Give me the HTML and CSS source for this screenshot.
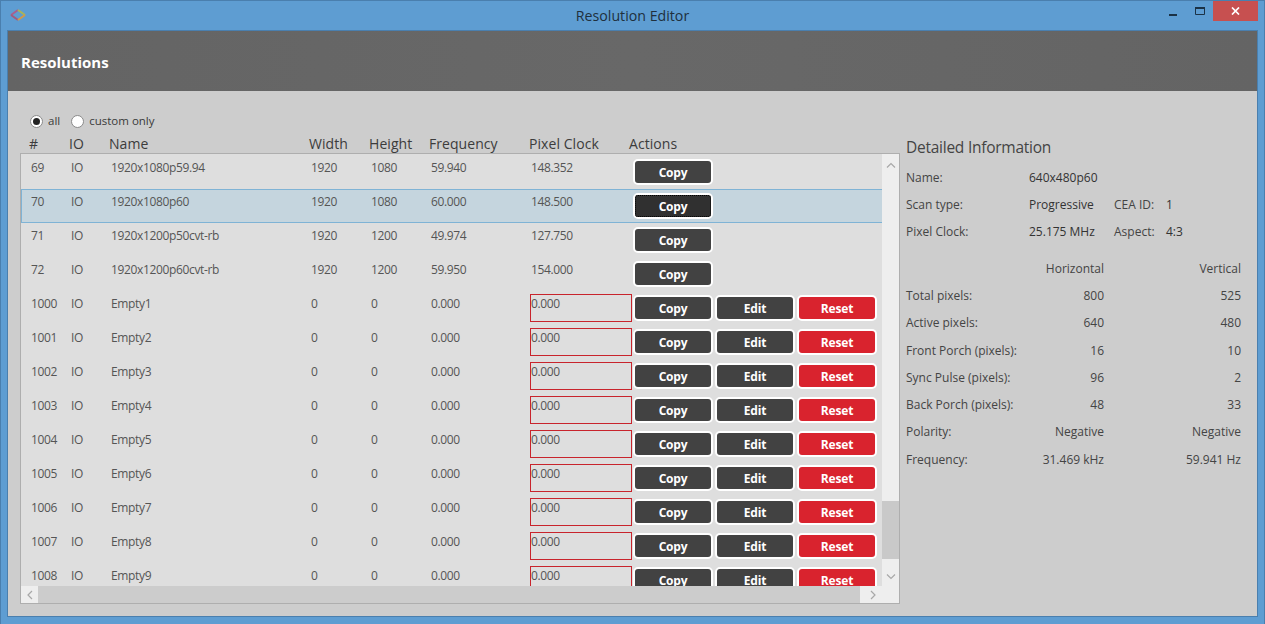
FILE: index.html
```html
<!DOCTYPE html>
<html lang="en">
<head>
<meta charset="utf-8">
<title>Resolution Editor</title>
<link rel="stylesheet" href="styles.css">
</head>
<body>
<div class="window">
  <div class="titlebar">
    <svg class="app-icon" width="16" height="12" viewBox="0 0 16 12"><path d="M1 6 8 1" fill="none" stroke="#a8608e" stroke-width="2"/><path d="M1 6 8 11" fill="none" stroke="#a05c80" stroke-width="2"/><path d="M8 1 15 6" fill="none" stroke="#a8b45a" stroke-width="2"/><path d="M8 11 15 6" fill="none" stroke="#d09a4a" stroke-width="2"/><path d="M8 3.6 11.2 6 8 8.4 4.8 6z" fill="#5f9fd0"/></svg>
    <div class="title">Resolution Editor</div>
    <div class="wincontrols">
      <svg class="wc-min" width="8" height="3" viewBox="0 0 8 3"><rect width="8" height="2" y="0" fill="#1b3246"/></svg>
      <svg class="wc-max" width="10" height="8" viewBox="0 0 10 8"><path d="M.5 1.5h9v6h-9z" fill="none" stroke="#1b3246"/><rect width="10" height="2" fill="#1b3246"/></svg>
      <div class="wc-close"><svg width="9" height="8" viewBox="0 0 9 8"><path d="M1 .5 8 7.5M8 .5 1 7.5" stroke="#fff" stroke-width="1.7"/></svg></div>
    </div>
  </div>
  <div class="client">
    <header class="banner">Resolutions</header>
    <main class="content">
      <section class="left">
        <div class="radios">
          <span class="radio checked"></span><span class="radio-label">all</span>
          <span class="radio"></span><span class="radio-label">custom only</span>
        </div>
        <div class="cols">
          <span>#</span><span>IO</span><span>Name</span><span>Width</span><span>Height</span><span>Frequency</span><span>Pixel Clock</span><span>Actions</span>
        </div>
        <div class="listbox">
          <div class="viewport">
            <div class="row"><span>69</span><span>IO</span><span>1920x1080p59.94</span><span>1920</span><span>1080</span><span>59.940</span><span>148.352</span><div class="actions"><button class="btn">Copy</button></div></div>
            <div class="row selected"><span>70</span><span>IO</span><span>1920x1080p60</span><span>1920</span><span>1080</span><span>60.000</span><span>148.500</span><div class="actions"><button class="btn focus">Copy</button></div></div>
            <div class="row"><span>71</span><span>IO</span><span>1920x1200p50cvt-rb</span><span>1920</span><span>1200</span><span>49.974</span><span>127.750</span><div class="actions"><button class="btn">Copy</button></div></div>
            <div class="row"><span>72</span><span>IO</span><span>1920x1200p60cvt-rb</span><span>1920</span><span>1200</span><span>59.950</span><span>154.000</span><div class="actions"><button class="btn">Copy</button></div></div>
            <div class="row"><span>1000</span><span>IO</span><span>Empty1</span><span>0</span><span>0</span><span>0.000</span><span class="clock">0.000</span><div class="actions"><button class="btn">Copy</button><button class="btn">Edit</button><button class="btn red">Reset</button></div></div>
            <div class="row"><span>1001</span><span>IO</span><span>Empty2</span><span>0</span><span>0</span><span>0.000</span><span class="clock">0.000</span><div class="actions"><button class="btn">Copy</button><button class="btn">Edit</button><button class="btn red">Reset</button></div></div>
            <div class="row"><span>1002</span><span>IO</span><span>Empty3</span><span>0</span><span>0</span><span>0.000</span><span class="clock">0.000</span><div class="actions"><button class="btn">Copy</button><button class="btn">Edit</button><button class="btn red">Reset</button></div></div>
            <div class="row"><span>1003</span><span>IO</span><span>Empty4</span><span>0</span><span>0</span><span>0.000</span><span class="clock">0.000</span><div class="actions"><button class="btn">Copy</button><button class="btn">Edit</button><button class="btn red">Reset</button></div></div>
            <div class="row"><span>1004</span><span>IO</span><span>Empty5</span><span>0</span><span>0</span><span>0.000</span><span class="clock">0.000</span><div class="actions"><button class="btn">Copy</button><button class="btn">Edit</button><button class="btn red">Reset</button></div></div>
            <div class="row"><span>1005</span><span>IO</span><span>Empty6</span><span>0</span><span>0</span><span>0.000</span><span class="clock">0.000</span><div class="actions"><button class="btn">Copy</button><button class="btn">Edit</button><button class="btn red">Reset</button></div></div>
            <div class="row"><span>1006</span><span>IO</span><span>Empty7</span><span>0</span><span>0</span><span>0.000</span><span class="clock">0.000</span><div class="actions"><button class="btn">Copy</button><button class="btn">Edit</button><button class="btn red">Reset</button></div></div>
            <div class="row"><span>1007</span><span>IO</span><span>Empty8</span><span>0</span><span>0</span><span>0.000</span><span class="clock">0.000</span><div class="actions"><button class="btn">Copy</button><button class="btn">Edit</button><button class="btn red">Reset</button></div></div>
            <div class="row"><span>1008</span><span>IO</span><span>Empty9</span><span>0</span><span>0</span><span>0.000</span><span class="clock">0.000</span><div class="actions"><button class="btn">Copy</button><button class="btn">Edit</button><button class="btn red">Reset</button></div></div>
          </div>
          <div class="vscroll">
            <div class="vthumb"><svg width="10" height="6" viewBox="0 0 10 6"><path d="M1 5.5 5 1.5 9 5.5" fill="none" stroke="#a8a8a8" stroke-width="1.2"/></svg></div>
            <div class="vtrack"></div>
            <div class="vend"><svg width="10" height="6" viewBox="0 0 10 6"><path d="M1 .5 5 4.5 9 .5" fill="none" stroke="#a8a8a8" stroke-width="1.2"/></svg></div>
          </div>
          <div class="hscroll">
            <div class="hstart"><svg width="6" height="10" viewBox="0 0 6 10"><path d="M5 1 1 5 5 9" fill="none" stroke="#a8a8a8" stroke-width="1.2"/></svg></div>
            <div class="htrack"></div>
            <div class="hend"><svg width="6" height="10" viewBox="0 0 6 10"><path d="M1 1 5 5 1 9" fill="none" stroke="#a8a8a8" stroke-width="1.2"/></svg></div>
          </div>
        </div>
      </section>
      <aside class="details">
        <h2>Detailed Information</h2>
        <div class="info"><span class="lab">Name:</span><span class="val">640x480p60</span></div>
        <div class="info"><span class="lab">Scan type:</span><span class="val">Progressive</span><span class="lab2">CEA ID:</span><span>1</span></div>
        <div class="info"><span class="lab">Pixel Clock:</span><span class="val">25.175 MHz</span><span class="lab2">Aspect:</span><span>4:3</span></div>
        <div class="timing head"><span></span><span>Horizontal</span><span>Vertical</span></div>
        <div class="timing"><span>Total pixels:</span><span>800</span><span>525</span></div>
        <div class="timing"><span>Active pixels:</span><span>640</span><span>480</span></div>
        <div class="timing"><span>Front Porch (pixels):</span><span>16</span><span>10</span></div>
        <div class="timing"><span>Sync Pulse (pixels):</span><span>96</span><span>2</span></div>
        <div class="timing"><span>Back Porch (pixels):</span><span>48</span><span>33</span></div>
        <div class="timing"><span>Polarity:</span><span>Negative</span><span>Negative</span></div>
        <div class="timing"><span>Frequency:</span><span>31.469 kHz</span><span>59.941 Hz</span></div>
      </aside>
    </main>
  </div>
</div>
</body>
</html>
```
FILE: styles.css
```css
* { box-sizing: border-box; }
html, body { margin: 0; height: 100%; overflow: hidden; }
body { font-family: "Open Sans", "Noto Sans", "Liberation Sans", sans-serif; font-size: 12px; color: #444; }
.window { width: 1265px; height: 624px; background: #5e9dd2; border: 1px solid #4a7fae; border-width: 1px 1px 0 1px; display: flex; flex-direction: column; padding: 0 6px 7px 6px; }
.titlebar { height: 29px; display: flex; align-items: flex-start; flex: none; position: relative; }
.app-icon { margin: 8px 0 0 3px; }
.title { position: absolute; left: 0; right: 0; top: 6px; text-align: center; font-size: 14.2px; line-height: 18px; color: #20303d; }
.wincontrols { margin-left: auto; display: flex; align-items: flex-start; position: relative; }
.wc-min { margin-top: 13px; }
.wc-max { margin: 6px 0 0 18px; }
.wc-close { width: 45px; height: 20px; background: #c75050; margin: 0 0 0 8px; display: flex; align-items: center; justify-content: center; }
.client { flex: 1; min-height: 0; border: 1px solid #4a7fae; background: #cdcdcd; display: flex; flex-direction: column; }
.banner { height: 60px; flex: none; background: linear-gradient(90deg, #646464, #686868 50%, #646464); color: #fff; font-weight: 700; font-size: 15px; line-height: 62px; padding-left: 13px; }
.content { flex: 1; min-height: 0; display: flex; padding: 22px 0 12px 12px; }
.left { width: 881px; flex: none; display: flex; flex-direction: column; }
.radios { display: flex; align-items: center; height: 14px; padding-left: 10px; margin-top: 1px; flex: none; color: #3a3a3a; }
.radio { width: 13px; height: 13px; border: 1px solid #8a8a8a; border-radius: 50%; background: #fff; position: relative; flex: none; }
.radio.checked::after { content: ""; position: absolute; left: 2px; top: 2px; width: 7px; height: 7px; border-radius: 50%; background: #222; }
.radio-label { margin: 0 11px 0 5px; font-size: 11.5px; line-height: 14px; }
.cols { display: grid; grid-template-columns: 40px 40px 200px 60px 60px 100px 100px auto; padding-left: 9px; height: 19px; margin-top: 6px; font-size: 14px; letter-spacing: .06px; line-height: 19px; color: #3c3c3c; flex: none; }
.listbox { width: 880px; height: 451px; flex: none; border: 1px solid #aeaeae; display: grid; grid-template-columns: 1fr 17px; grid-template-rows: 1fr 17px; background: #dedede; }
.viewport { overflow: hidden; padding-top: 1px; min-width: 0; min-height: 0; }
.row { height: 34px; display: grid; grid-template-columns: 40px 40px 200px 60px 60px 100px 103px auto; padding: 5px 0 0 10px; line-height: 16px; letter-spacing: -.35px; color: #555; position: relative; }
.row.selected { background: #c5d5de; box-shadow: inset 1px 0 0 #7fb3d5, inset 0 1px 0 #7fb3d5, inset 0 -1px 0 #7fb3d5; }
.clock { margin: -2px 0 0 -1px; width: 102px; height: 28px; border: 1px solid #c8242c; padding: 1px 0 0 0; line-height: 16px; }
.actions { display: flex; gap: 2px; margin: -1px 0 0 -1px; height: 26px; }
.btn { width: 80px; height: 26px; flex: none; border: 2px solid #fff; border-radius: 5px; background: #424242; color: #fff; font: 700 12px/18px "Open Sans", "Noto Sans", sans-serif; letter-spacing: -.2px; padding: 2px 0 0; }
.btn.red { background: #d9232e; }
.btn.focus { background: #303030; outline: 1px dotted #000; outline-offset: -3px; }
.vscroll { display: flex; flex-direction: column; }
.vthumb { height: 347px; background: #eeeeee; display: flex; justify-content: center; padding-top: 8px; }
.vtrack { height: 58px; background: #c9c9c9; }
.vend { flex: 1; background: #eeeeee; display: flex; justify-content: center; align-items: flex-end; padding-bottom: 6px; }
.hscroll { grid-column: 1 / -1; display: flex; background: #cccccc; }
.hstart { width: 17px; background: #eeeeee; display: flex; align-items: center; justify-content: center; }
.htrack { flex: 1; }
.hend { width: 39px; background: #eeeeee; display: flex; align-items: center; padding-left: 10px; }
.details { flex: 1; padding: 23px 0 0 5px; min-width: 0; }
.details h2 { font-size: 15.5px; font-weight: 400; letter-spacing: -.25px; margin: 0 0 11px; line-height: 22px; color: #444; }
.info { display: flex; height: 27px; line-height: 18px; color: #333; }
.lab { width: 123px; color: #444; }
.val { width: 85px; }
.lab2 { width: 52px; color: #444; }
.timing { display: grid; grid-template-columns: 118px 80px 137px; height: 27.25px; line-height: 18px; white-space: nowrap; }
.timing span:nth-child(n+2) { text-align: right; }
.timing.head { margin-top: 10px; height: 27px; }
.timing span:first-child { color: #444; }
```
